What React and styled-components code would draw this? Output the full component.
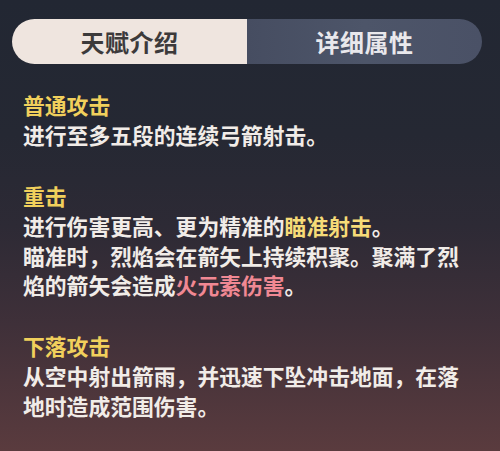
import React from "react";
import styled, { createGlobalStyle } from "styled-components";

const Global = createGlobalStyle`
  html, body { margin: 0; padding: 0; }
  body {
    width: 500px;
    height: 451px;
    overflow: hidden;
    font-family: "Noto Sans CJK SC", "Noto Sans", sans-serif;
  }
`;

const Page = styled.div`
  width: 500px;
  height: 451px;
  box-sizing: border-box;
  padding: 19px 18px 0 12px;
  background: linear-gradient(
    180deg,
    #222733 0%,
    #252833 30%,
    #2d2a35 50%,
    #3f3039 72%,
    #5a3b3e 100%
  );
  display: flex;
  flex-direction: column;
`;

const Tabs = styled.div`
  display: flex;
  height: 45px;
  border-radius: 23px;
  overflow: hidden;
  width: 470px;
`;

const Tab = styled.div`
  flex: 0 0 235px;
  display: flex;
  align-items: center;
  justify-content: center;
  font-size: 24px;
  font-weight: 700;
  letter-spacing: 0.5px;
  background: ${(p) =>
    p.$active ? "#efe5df" : "linear-gradient(90deg, #464d61 0%, #4d5569 50%, #4a5166 100%)"};
  color: ${(p) => (p.$active ? "#3c3a3b" : "#e9e8ec")};
`;

const Content = styled.div`
  padding: 26px 0 0 11px;
  display: flex;
  flex-direction: column;
  gap: 31px;
`;

const Section = styled.div`
  display: flex;
  flex-direction: column;
`;

const Heading = styled.div`
  font-size: 21.8px;
  font-weight: 700;
  line-height: 30px;
  color: #f1d05c;
`;

const Line = styled.div`
  font-size: 21.8px;
  font-weight: 700;
  line-height: 29.8px;
  color: #f1ece8;
  white-space: nowrap;
`;

const Mark = styled.span`
  color: ${(p) => (p.$tone === "pyro" ? "#f08893" : "#f6db78")};
`;

export default function App() {
  return (
    <>
      <Global />
      <Page>
        <Tabs>
          <Tab $active>天赋介绍</Tab>
          <Tab>详细属性</Tab>
        </Tabs>
        <Content>
          <Section>
            <Heading>普通攻击</Heading>
            <Line>进行至多五段的连续弓箭射击。</Line>
          </Section>
          <Section>
            <Heading>重击</Heading>
            <Line>
              进行伤害更高、更为精准的<Mark>瞄准射击</Mark>。
            </Line>
            <Line>瞄准时，烈焰会在箭矢上持续积聚。聚满了烈</Line>
            <Line>
              焰的箭矢会造成<Mark $tone="pyro">火元素伤害</Mark>。
            </Line>
          </Section>
          <Section>
            <Heading>下落攻击</Heading>
            <Line>从空中射出箭雨，并迅速下坠冲击地面，在落</Line>
            <Line>地时造成范围伤害。</Line>
          </Section>
        </Content>
      </Page>
    </>
  );
}
